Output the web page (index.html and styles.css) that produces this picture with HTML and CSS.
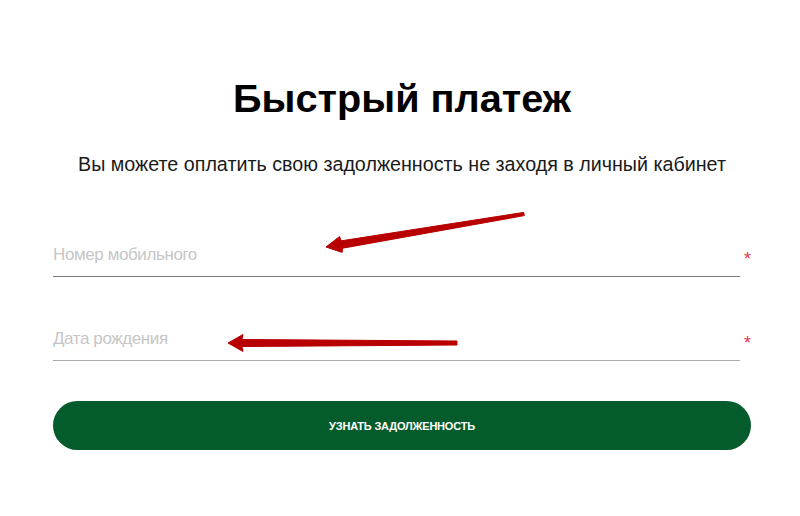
FILE: index.html
```html
<!DOCTYPE html>
<html lang="ru">
<head>
<meta charset="utf-8">
<title>Быстрый платеж</title>
<link rel="stylesheet" href="styles.css">
</head>
<body>
<main class="page">
  <h1 class="title">Быстрый платеж</h1>
  <p class="lead">Вы можете оплатить свою задолженность не заходя в личный кабинет</p>
  <form class="form">
    <label class="field">
      <input class="input" type="text" placeholder="Номер мобильного">
      <span class="req">*</span>
    </label>
    <label class="field field-second">
      <input class="input input-light" type="text" placeholder="Дата рождения">
      <span class="req">*</span>
    </label>
    <button class="btn" type="button">УЗНАТЬ ЗАДОЛЖЕННОСТЬ</button>
  </form>
  <svg class="annot" width="800" height="516" viewBox="0 0 800 516" aria-hidden="true">
    <polygon points="326,247 342.1,252.4 342.6,248.2 524.3,215.6 523.7,212.4 341.4,240.8 339.5,236.6" fill="#b80000" stroke="#b80000" stroke-width="1" stroke-linejoin="round"/>
    <polygon points="228,343 243,351.5 242,346.5 457,345 457,341 242,339.5 243,334.5" fill="#b80000" stroke="#b80000" stroke-width="1" stroke-linejoin="round"/>
  </svg>
</main>
</body>
</html>
```
FILE: styles.css
```css
html, body {
  margin: 0;
  padding: 0;
  background: #ffffff;
}
body {
  font-family: "Liberation Sans", Arial, sans-serif;
  color: #111111;
}
.page {
  position: relative;
  width: 800px;
  height: 516px;
  box-sizing: border-box;
  padding: 74px 49px 0 53px;
  display: flex;
  flex-direction: column;
  overflow: hidden;
}
.title {
  margin: 0;
  font-size: 39.7px;
  line-height: 48px;
  font-weight: 700;
  text-align: center;
  color: #000000;
}
.lead {
  margin: 30px 0 0;
  font-size: 19.7px;
  line-height: 24px;
  text-align: center;
  color: #1a1a1a;
}
.form {
  display: flex;
  flex-direction: column;
  margin-top: 62px;
}
.field {
  display: flex;
  align-items: flex-start;
  gap: 4px;
}
.field-second {
  margin-top: 45px;
}
.input {
  flex: 0 0 687px;
  box-sizing: border-box;
  height: 39px;
  border: 0;
  border-bottom: 1px solid #7a7a7a;
  padding: 0 0 4px;
  margin: 0;
  font-family: "Liberation Sans", Arial, sans-serif;
  font-size: 17px;
  letter-spacing: -0.4px;
  color: #333;
  background: transparent;
  outline: none;
  display: block;
}
.input-light {
  border-bottom-color: #ababab;
}
.input::placeholder {
  color: #c6c6c6;
}
.req {
  color: #e5354f;
  font-size: 18px;
  line-height: 18px;
  margin-top: 12px;
}
.btn {
  margin-top: 40px;
  height: 49px;
  width: 698px;
  border: 0;
  border-radius: 25px;
  background: #045c2c;
  color: #ffffff;
  font-family: "Liberation Sans", Arial, sans-serif;
  font-weight: 700;
  font-size: 11px;
  letter-spacing: -0.2px;
  padding: 0;
  cursor: pointer;
}
.annot {
  position: absolute;
  left: 0;
  top: 0;
  pointer-events: none;
}
```
